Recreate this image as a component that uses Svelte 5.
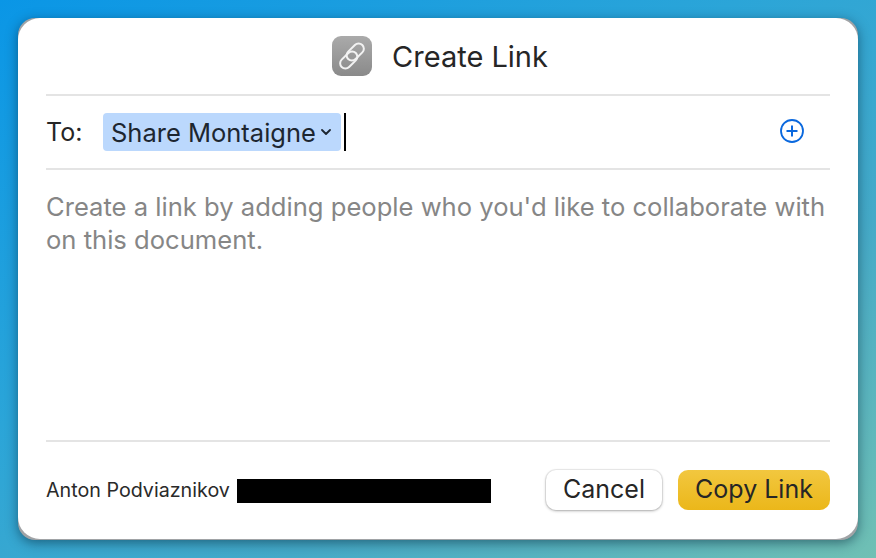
<script>
  let title = "Create Link";
  let hint = "Create a link by adding people who you'd like to collaborate with on this document.";
</script>

<main class="desktop">
  <div class="frame">
    <div class="dialog">
      <header class="title-bar">
        <div class="app-icon">
          <svg viewBox="0 0 40 40" width="40" height="40" fill="none" stroke="#f2f2f2" stroke-width="2">
            <rect x="18" y="6" width="10.5" height="20" rx="5.25" transform="rotate(45 23.25 16)" />
            <rect x="11.5" y="14" width="10.5" height="20" rx="5.25" transform="rotate(45 16.75 24)" />
          </svg>
        </div>
        <h1>{title}</h1>
      </header>

      <div class="to-row">
        <span class="to-label">To:</span>
        <span class="token">
          Share Montaigne
          <svg viewBox="0 0 10 6" width="10" height="6" fill="none" stroke="#1d2630" stroke-width="1.8" stroke-linecap="round" stroke-linejoin="round">
            <path d="M1 1l4 4 4-4" />
          </svg>
        </span>
        <span class="caret"></span>
        <svg class="add" viewBox="0 0 24 24" width="24" height="24" fill="none" stroke="#0a68de">
          <circle cx="12" cy="12" r="11" stroke-width="1.8" />
          <path d="M12 6.5v11M6.5 12h11" stroke-width="2" />
        </svg>
      </div>

      <p class="hint">{hint}</p>

      <footer class="footer">
        <span class="owner">Anton Podviaznikov</span>
        <span class="redacted"></span>
        <div class="buttons">
          <button class="cancel">Cancel</button>
          <button class="primary">Copy Link</button>
        </div>
      </footer>
    </div>
  </div>
</main>

<style>
  :global(body) {
    margin: 0;
  }

  .desktop {
    box-sizing: border-box;
    width: 876px;
    height: 558px;
    padding: 18px;
    overflow: hidden;
    background: linear-gradient(150deg, #0a96e6 0%, #2ba5d8 40%, #45aac8 68%, #70c0b4 100%);
    font-family: Inter, "Liberation Sans", sans-serif;
    color: #262626;
  }

  .frame {
    width: 840px;
    height: 522px;
    background: #a0a3a6;
    border-radius: 17px;
    box-shadow: 0 3px 12px rgba(0, 30, 50, 0.5);
  }

  .dialog {
    box-sizing: border-box;
    display: flex;
    flex-direction: column;
    width: 840px;
    height: 521px;
    padding: 0 28px;
    background: #fff;
    border-radius: 22px;
  }

  .title-bar {
    display: flex;
    justify-content: center;
    align-items: center;
    gap: 20px;
    height: 78px;
    padding-left: 4px;
    box-sizing: border-box;
    flex: none;
    border-bottom: 2px solid #e4e4e4;
  }

  .app-icon {
    width: 40px;
    height: 40px;
    border-radius: 9px;
    background: linear-gradient(180deg, #aaa, #8a8a8a);
  }

  .app-icon svg {
    display: block;
  }

  h1 {
    margin: 0;
    font-size: 29px;
    font-weight: 400;
    color: #262626;
  }

  .to-row {
    display: flex;
    align-items: center;
    height: 74px;
    box-sizing: border-box;
    flex: none;
    border-bottom: 2px solid #e4e4e4;
  }

  .to-label {
    width: 57px;
    font-size: 25px;
  }

  .token {
    display: flex;
    align-items: center;
    gap: 5px;
    height: 38px;
    padding: 0 10px 0 8px;
    background: #bbd8fd;
    border-radius: 4px;
    font-size: 25.5px;
    color: #1d2630;
  }

  .caret {
    width: 2px;
    height: 38px;
    margin-left: 3px;
    background: #000;
  }

  .add {
    margin-left: auto;
    margin-right: 26px;
    margin-top: -2px;
  }

  .hint {
    flex: 1;
    margin: 0;
    padding-top: 20px;
    font-size: 25.6px;
    line-height: 33px;
    color: #868686;
  }

  .footer {
    display: flex;
    align-items: center;
    height: 99px;
    padding-bottom: 1px;
    flex: none;
    box-sizing: border-box;
    border-top: 2px solid #e4e4e4;
  }

  .owner {
    font-size: 19.7px;
    color: #2a2a2a;
  }

  .redacted {
    width: 254px;
    height: 24px;
    margin-left: 7px;
    margin-top: 2px;
    background: #000;
  }

  .buttons {
    display: flex;
    gap: 16px;
    margin-left: auto;
  }

  button {
    height: 40px;
    padding: 0 0 2px;
    border: none;
    border-radius: 10px;
    font-family: inherit;
    font-size: 25px;
    color: #262626;
  }

  .cancel {
    width: 116px;
    background: #fff;
    box-shadow: 0 0 0 1px rgba(0, 0, 0, 0.06), 0 1px 3px rgba(0, 0, 0, 0.3);
  }

  .primary {
    width: 152px;
    background: linear-gradient(180deg, #f2c73f, #ebb71a);
  }
</style>
